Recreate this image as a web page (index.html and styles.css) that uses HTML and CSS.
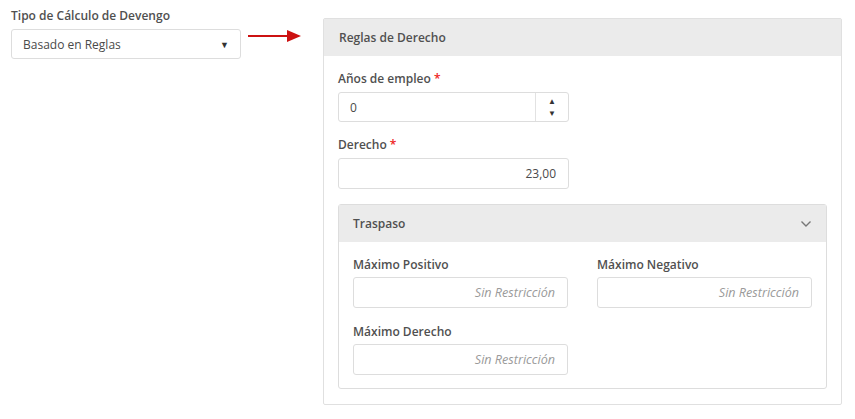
FILE: index.html
```html
<!DOCTYPE html>
<html lang="es">
<head>
<meta charset="utf-8">
<link rel="stylesheet" href="styles.css">
</head>
<body>
<div class="page">
  <div class="left">
    <label class="label">Tipo de Cálculo de Devengo</label>
    <div class="select">
      <span>Basado en Reglas</span>
      <span class="caret">&#9660;</span>
    </div>
  </div>
  <svg class="arrow" width="54" height="12" viewBox="0 0 54 12">
    <rect x="0" y="5" width="41" height="2" fill="#cc1111"/>
    <polygon points="39,0 53,6 39,12" fill="#cc1111"/>
  </svg>
  <div class="panel">
    <div class="panel-head">Reglas de Derecho</div>
    <div class="panel-body">
      <label class="label">Años de empleo <span class="req">*</span></label>
      <div class="input spin">
        <span class="val">0</span>
        <span class="spinner"><span>&#9650;</span><span>&#9660;</span></span>
      </div>
      <label class="label">Derecho <span class="req">*</span></label>
      <div class="input right tall"><span class="val">23,00</span></div>
      <div class="subpanel">
        <div class="sub-head">
          <span>Traspaso</span>
          <svg width="12" height="8" viewBox="0 0 12 8"><polyline points="1.5,1.5 6,6 10.5,1.5" fill="none" stroke="#777" stroke-width="1.4"/></svg>
        </div>
        <div class="sub-body">
          <div class="field">
            <label class="label">Máximo Positivo</label>
            <div class="input right tall"><span class="ph">Sin Restricción</span></div>
          </div>
          <div class="field">
            <label class="label">Máximo Negativo</label>
            <div class="input right tall"><span class="ph">Sin Restricción</span></div>
          </div>
          <div class="field">
            <label class="label">Máximo Derecho</label>
            <div class="input right tall"><span class="ph">Sin Restricción</span></div>
          </div>
        </div>
      </div>
    </div>
  </div>
</div>
</body>
</html>
```

FILE: styles.css
```css
* { box-sizing: border-box; }
body {
  margin: 0;
  background: #fff;
  font-family: "Open Sans", "Liberation Sans", sans-serif;
  font-size: 12px;
  color: #4a4a4a;
}
.page {
  display: flex;
  align-items: flex-start;
  padding: 8px 0 0 11px;
}
.left {
  width: 230px;
  display: flex;
  flex-direction: column;
}
.label {
  display: block;
  font-weight: 600;
  font-size: 12px;
  line-height: 16px;
  color: #505050;
}
.left .label { margin-bottom: 5px; }
.req { color: #e22; }
.select {
  height: 30px;
  border: 1px solid #ddd;
  border-radius: 3px;
  display: flex;
  align-items: center;
  justify-content: space-between;
  padding: 0 11px 0 11px;
  color: #4a4a4a;
}
.caret { font-size: 9px; color: #333; }
.arrow { margin: 22px 0 0 7px; }
.panel {
  margin: 10px 0 0 21px;
  width: 519px;
  border: 1px solid #e0e0e0;
  border-radius: 2px;
}
.panel-head {
  height: 37px;
  background: #ebebeb;
  display: flex;
  align-items: center;
  padding-left: 15px;
  font-weight: 600;
  color: #505050;
}
.panel-body {
  padding: 15px 14px 15px 14px;
}
.panel-body > .label { margin-bottom: 5px; }
.input {
  height: 30px;
  border: 1px solid #ddd;
  border-radius: 3px;
  display: flex;
  align-items: center;
  padding: 0 11px;
  color: #4a4a4a;
}
.input.tall { height: 31px; }
.panel-body > .input { width: 231px; margin-bottom: 15px; }
.input.right { justify-content: flex-end; padding-right: 12px; }
.spin { padding-right: 0; justify-content: space-between; }
.spinner {
  width: 33px;
  height: 100%;
  border-left: 1px solid #e2e2e2;
  display: flex;
  flex-direction: column;
  align-items: center;
  justify-content: center;
  gap: 2px;
  font-size: 8px;
  line-height: 10px;
  color: #333;
}
.ph { font-style: italic; color: #9a9a9a; font-size: 12.6px; }
.subpanel {
  border: 1px solid #ddd;
  border-radius: 3px;
}
.sub-head {
  height: 37px;
  background: #ebebeb;
  display: flex;
  align-items: center;
  justify-content: space-between;
  padding: 0 14px 0 14px;
  font-weight: 600;
  color: #505050;
}
.sub-body {
  display: grid;
  grid-template-columns: 1fr 1fr;
  column-gap: 29px;
  row-gap: 16px;
  padding: 15px 14px 13px 14px;
}
.field .label { margin-bottom: 4px; }
```
